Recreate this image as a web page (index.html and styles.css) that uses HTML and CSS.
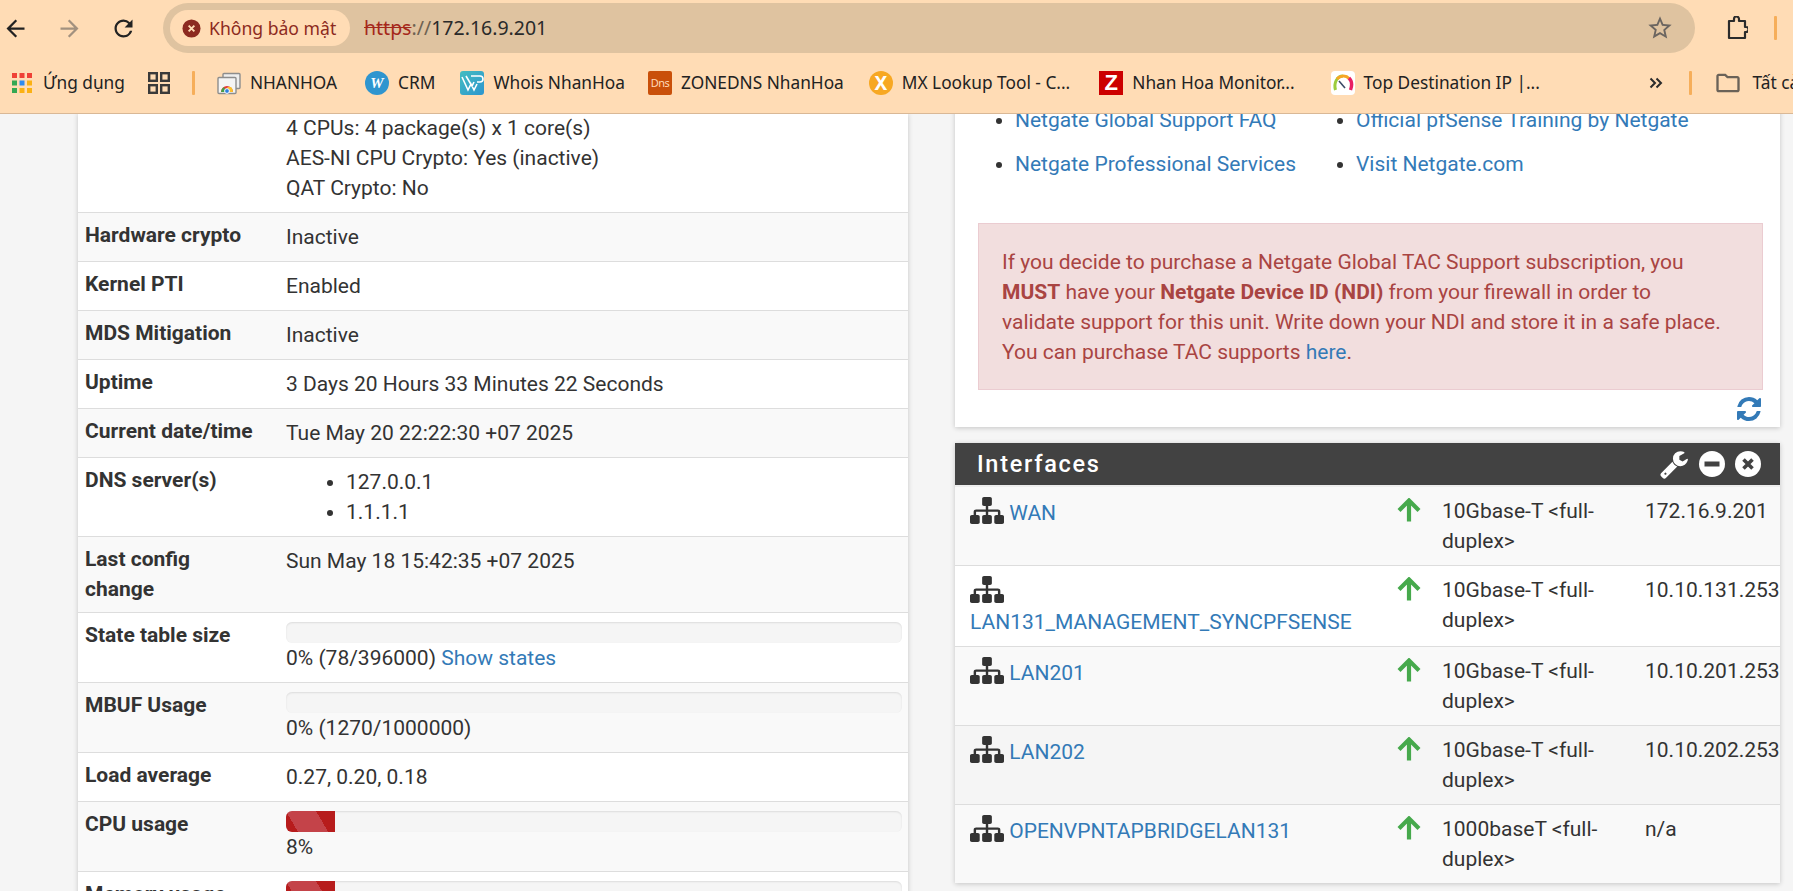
FILE: index.html
```html
<!DOCTYPE html>
<html lang="vi">
<head>
  <meta charset="UTF-8">
  <title>pfSense - Dashboard</title>
  <link rel="stylesheet" href="styles.css">
</head>
<body>

  <!-- Thanh trinh duyet -->
  <header class="browser">
    <div class="toolbar">
      <svg class="nav-icon" viewBox="0 0 24 24"><path d="M20 11H7.83l5.59-5.59L12 4l-8 8 8 8 1.41-1.41L7.83 13H20v-2z"/></svg>
      <svg class="nav-icon nav-off" viewBox="0 0 24 24"><path d="M12 4l-1.41 1.41L16.17 11H4v2h12.17l-5.58 5.59L12 20l8-8z"/></svg>
      <svg class="nav-icon" viewBox="0 0 24 24"><path d="M17.65 6.35A7.958 7.958 0 0 0 12 4c-4.42 0-7.99 3.58-7.99 8s3.57 8 7.99 8c3.73 0 6.84-2.55 7.73-6h-2.08A5.99 5.99 0 0 1 12 18c-3.31 0-6-2.69-6-6s2.69-6 6-6c1.66 0 3.14.69 4.22 1.78L13 11h7V4l-2.35 2.35z"/></svg>
      <div class="omnibox">
        <div class="chip">
          <svg class="chip-icon" viewBox="0 0 20 20">
            <circle cx="10" cy="10" r="9.5" fill="#8c2a20"/>
            <path d="M7 7l6 6M13 7l-6 6" stroke="#ffdcb5" stroke-width="2"/>
          </svg>
          <span>Không bảo mật</span>
        </div>
        <div class="url"><s>https</s><span class="url-sep">://</span>172.16.9.201</div>
        <svg class="star" viewBox="0 0 24 24"><path d="M22 9.24l-7.19-.62L12 2 9.19 8.63 2 9.24l5.46 4.73L5.82 21 12 17.27 18.18 21l-1.63-7.03L22 9.24zM12 15.4l-3.76 2.27 1-4.28-3.32-2.88 4.38-.38L12 6.1l1.71 4.04 4.38.38-3.32 2.88 1 4.28L12 15.4z"/></svg>
      </div>
      <svg class="ext-icon" viewBox="0 0 22 24"><path d="M3 5h5V3a2 2 0 0 1 5 0v2h6v6h1a2.4 2.4 0 0 1 0 5h-1v6H3z" fill="none" stroke="#2b2b2b" stroke-width="2.2" stroke-linejoin="round"/></svg>
      <span class="sep sep-end"></span>
    </div>

    <nav class="bookmarks">
      <a class="bm bm-apps">
        <svg class="fav" viewBox="0 0 20 20">
          <rect width="5" height="5" fill="#ef4136"/><rect x="7.5" width="5" height="5" fill="#ef4136"/><rect x="15" width="5" height="5" fill="#ef4136"/>
          <rect y="7.5" width="5" height="5" fill="#34a853"/><rect x="7.5" y="7.5" width="5" height="5" fill="#2f8bf0"/><rect x="15" y="7.5" width="5" height="5" fill="#fbb114"/>
          <rect y="15" width="5" height="5" fill="#34a853"/><rect x="7.5" y="15" width="5" height="5" fill="#fbb114"/><rect x="15" y="15" width="5" height="5" fill="#fbb114"/>
        </svg>
        <span>Ứng dụng</span>
      </a>
      <svg class="grid-icon" viewBox="0 0 22 22">
        <g fill="none" stroke="#3a3a3a" stroke-width="2.4"><rect x="1.2" y="1.2" width="7.6" height="7.6"/><rect x="13.2" y="1.2" width="7.6" height="7.6"/><rect x="1.2" y="13.2" width="7.6" height="7.6"/><rect x="13.2" y="13.2" width="7.6" height="7.6"/></g>
      </svg>
      <span class="sep sep-bar"></span>

      <a class="bm bm-nhanhoa">
        <svg class="fav" viewBox="0 0 24 24">
          <rect x="6" y="2.5" width="17" height="15" rx="1" fill="#eee" stroke="#8d8d8d" stroke-width="1.4"/>
          <rect x="1" y="6.5" width="18" height="16" rx="1" fill="#f4f4f4" stroke="#8d8d8d" stroke-width="1.4"/>
          <path d="M4 21a6 6 0 0 1 12 0z" fill="#e53935"/>
          <path d="M4 21a6 6 0 0 1 3-5l2 5z" fill="#43a047"/>
          <path d="M12 21a6 6 0 0 0-2-5l4 0a6 6 0 0 1 2 5z" fill="#fbc02d"/>
          <circle cx="10" cy="20" r="2.4" fill="#2f7fe0" stroke="#fff" stroke-width="1"/>
        </svg>
        <span>NHANHOA</span>
      </a>
      <a class="bm bm-crm">
        <span class="fav fav-w">W</span>
        <span>CRM</span>
      </a>
      <a class="bm bm-whois">
        <svg class="fav" viewBox="0 0 24 24">
          <defs><linearGradient id="whoisBg" x1="0" y1="0" x2="1" y2="1"><stop offset="0" stop-color="#45bdc0"/><stop offset="1" stop-color="#2b95cf"/></linearGradient></defs>
          <rect width="24" height="24" rx="3" fill="url(#whoisBg)"/>
          <path d="M2 6l6 13 3-6 3 6 3-6M6 5l6 10 2-4M11 5h9a2.5 2.5 0 0 1 0 6h-3" fill="none" stroke="#fff" stroke-width="1.6"/>
        </svg>
        <span>Whois NhanHoa</span>
      </a>
      <a class="bm bm-dns">
        <span class="fav fav-dns">Dns</span>
        <span>ZONEDNS NhanHoa</span>
      </a>
      <a class="bm bm-mx">
        <span class="fav fav-mx">X</span>
        <span>MX Lookup Tool - C...</span>
      </a>
      <a class="bm bm-zabbix">
        <span class="fav fav-z">Z</span>
        <span>Nhan Hoa Monitor...</span>
      </a>
      <a class="bm bm-top">
        <svg class="fav" viewBox="0 0 24 24">
          <rect width="24" height="24" rx="4" fill="#fff"/>
          <path d="M4.5 19C2.5 12 6 5 12 5" fill="none" stroke="#9ccc3c" stroke-width="3"/>
          <path d="M6 8c3-3.5 9-4 12-.5" fill="none" stroke="#f6a623" stroke-width="3"/>
          <path d="M18 7c3 3 3 8 1.5 12" fill="none" stroke="#e91e63" stroke-width="3.4"/>
          <path d="M8 10l6 7" stroke="#3a4a66" stroke-width="1.6"/>
        </svg>
        <span>Top Destination IP |...</span>
      </a>
      <svg class="more" viewBox="0 0 14 12"><path d="M1.500 1.500L6 6l-4.500 4.500M7.500 1.500L12 6l-4.500 4.500" fill="none" stroke="#2b2b2b" stroke-width="2"/></svg>
      <span class="sep sep-more"></span>
      <svg class="folder" viewBox="0 0 24 24"><path d="M20 6h-8l-2-2H4c-1.1 0-2 .9-2 2v12c0 1.1.9 2 2 2h16c1.1 0 2-.9 2-2V8c0-1.1-.9-2-2-2zm0 12H4V6h5.17l2 2H20v10z"/></svg>
      <span class="bm-all">Tất cả dấu trang</span>
    </nav>
  </header>

  <main class="content">

    <!-- Cot trai: System Information -->
    <section class="panel panel-system">
      <table class="info">
        <tbody>
          <tr class="first">
            <th></th>
            <td>4 CPUs: 4 package(s) x 1 core(s)<br>AES-NI CPU Crypto: Yes (inactive)<br>QAT Crypto: No</td>
          </tr>
          <tr><th>Hardware crypto</th><td>Inactive</td></tr>
          <tr><th>Kernel PTI</th><td>Enabled</td></tr>
          <tr><th>MDS Mitigation</th><td>Inactive</td></tr>
          <tr><th>Uptime</th><td>3 Days 20 Hours 33 Minutes 22 Seconds</td></tr>
          <tr><th>Current date/time</th><td>Tue May 20 22:22:30 +07 2025</td></tr>
          <tr>
            <th>DNS server(s)</th>
            <td><ul class="dns"><li>127.0.0.1</li><li>1.1.1.1</li></ul></td>
          </tr>
          <tr><th>Last config<br>change</th><td>Sun May 18 15:42:35 +07 2025</td></tr>
          <tr>
            <th>State table size</th>
            <td><div class="progress"></div>0% (78/396000) <a href="#">Show states</a></td>
          </tr>
          <tr>
            <th>MBUF Usage</th>
            <td><div class="progress"></div>0% (1270/1000000)</td>
          </tr>
          <tr><th>Load average</th><td>0.27, 0.20, 0.18</td></tr>
          <tr>
            <th>CPU usage</th>
            <td><div class="progress"><div class="progress-bar" style="width: 8%"></div></div>8%</td>
          </tr>
          <tr>
            <th>Memory usage</th>
            <td><div class="progress"><div class="progress-bar" style="width: 8%"></div></div>8%</td>
          </tr>
        </tbody>
      </table>
    </section>

    <div class="col-right">
      <!-- Netgate Services And Support -->
      <section class="panel panel-support">
        <div class="links">
          <ul>
            <li><a href="#">Netgate Global Support FAQ</a></li>
            <li><a href="#">Netgate Professional Services</a></li>
          </ul>
          <ul>
            <li><a href="#">Official pfSense Training by Netgate</a></li>
            <li><a href="#">Visit Netgate.com</a></li>
          </ul>
        </div>
        <div class="alert">
          If you decide to purchase a Netgate Global TAC Support subscription, you<br>
          <b>MUST</b> have your <b>Netgate Device ID (NDI)</b> from your firewall in order to<br>
          validate support for this unit. Write down your NDI and store it in a safe place.<br>
          You can purchase TAC supports <a href="#">here</a>.
        </div>
        <div class="panel-foot">
          <svg class="refresh" viewBox="0 0 1792 1792"><path d="M1639 1056q0 5-1 7-64 268-268 434.5t-478 166.5q-146 0-282.5-55t-243.5-157l-129 129q-19 19-45 19t-45-19-19-45v-448q0-26 19-45t45-19h448q26 0 45 19t19 45-19 45l-137 137q71 66 161 102t187 36q134 0 250-65t186-179q11-17 53-117 8-23 30-23h192q13 0 22.5 9.5t9.5 22.5zm25-800v448q0 26-19 45t-45 19h-448q-26 0-45-19t-19-45 19-45l138-138q-148-137-349-137-134 0-250 65t-186 179q-11 17-53 117-8 23-30 23h-199q-13 0-22.5-9.5t-9.5-22.5v-7q65-268 270-434.5t480-166.5q146 0 284 55.5t245 156.5l130-129q19-19 45-19t45 19 19 45z"/></svg>
        </div>
      </section>

      <!-- Interfaces -->
      <section class="panel panel-interfaces">
        <div class="panel-heading">
          <h2>Interfaces</h2>
          <div class="panel-tools">
            <svg class="tool-wrench" viewBox="0 0 1792 1792"><path d="M448 1472q0-26-19-45t-45-19-45 19-19 45 19 45 45 19 45-19 19-45zm644-420l-682 682q-37 37-90 37-52 0-91-37l-106-108q-38-36-38-90 0-53 38-91l681-681q39 98 114.5 173.5t173.5 114.5zm634-435q0 39-23 106-47 134-164.5 217.5t-258.5 83.5q-185 0-316.5-131.5t-131.5-316.5 131.5-316.5 316.5-131.5q58 0 121.5 16.5t107.5 46.5q16 11 16 28t-16 28l-293 169v224l193 107q5-3 79-48.5t135.5-81 70.5-35.5q15 0 23.5 10t8.5 25z"/></svg>
            <svg class="tool-circle" viewBox="0 0 26 26"><circle cx="13" cy="13" r="13" fill="#fff"/><rect x="5.5" y="10.5" width="15" height="5" fill="#424242"/></svg>
            <svg class="tool-circle" viewBox="0 0 26 26"><circle cx="13" cy="13" r="13" fill="#fff"/><path d="M8.5 8.5l9 9M17.5 8.5l-9 9" stroke="#424242" stroke-width="3.6"/></svg>
          </div>
        </div>
        <table class="ifaces">
          <colgroup><col class="c-name"><col class="c-state"><col class="c-media"><col class="c-ip"></colgroup>
          <tbody>
            <tr>
              <td class="name"><svg class="sitemap" viewBox="0 128 1792 1536" preserveAspectRatio="none"><use href="#sitemapPath"/></svg> <a href="#">WAN</a></td>
              <td><svg class="up" viewBox="0 0 24 24"><use href="#upPath"/></svg></td>
              <td>10Gbase-T &lt;full-duplex&gt;</td>
              <td>172.16.9.201</td>
            </tr>
            <tr>
              <td class="name"><svg class="sitemap" viewBox="0 128 1792 1536" preserveAspectRatio="none"><use href="#sitemapPath"/></svg><br><a href="#">LAN131_MANAGEMENT_SYNCPFSENSE</a></td>
              <td><svg class="up" viewBox="0 0 24 24"><use href="#upPath"/></svg></td>
              <td>10Gbase-T &lt;full-duplex&gt;</td>
              <td>10.10.131.253</td>
            </tr>
            <tr>
              <td class="name"><svg class="sitemap" viewBox="0 128 1792 1536" preserveAspectRatio="none"><use href="#sitemapPath"/></svg> <a href="#">LAN201</a></td>
              <td><svg class="up" viewBox="0 0 24 24"><use href="#upPath"/></svg></td>
              <td>10Gbase-T &lt;full-duplex&gt;</td>
              <td>10.10.201.253</td>
            </tr>
            <tr>
              <td class="name"><svg class="sitemap" viewBox="0 128 1792 1536" preserveAspectRatio="none"><use href="#sitemapPath"/></svg> <a href="#">LAN202</a></td>
              <td><svg class="up" viewBox="0 0 24 24"><use href="#upPath"/></svg></td>
              <td>10Gbase-T &lt;full-duplex&gt;</td>
              <td>10.10.202.253</td>
            </tr>
            <tr>
              <td class="name"><svg class="sitemap" viewBox="0 128 1792 1536" preserveAspectRatio="none"><use href="#sitemapPath"/></svg> <a href="#">OPENVPNTAPBRIDGELAN131</a></td>
              <td><svg class="up" viewBox="0 0 24 24"><use href="#upPath"/></svg></td>
              <td>1000baseT &lt;full-duplex&gt;</td>
              <td>n/a</td>
            </tr>
          </tbody>
        </table>
      </section>
    </div>
  </main>

  <!-- icon dung chung -->
  <svg class="defs">
    <defs>
      <path id="sitemapPath" d="M1792 1248v320q0 40-28 68t-68 28h-320q-40 0-68-28t-28-68v-320q0-40 28-68t68-28h96v-192h-512v192h96q40 0 68 28t28 68v320q0 40-28 68t-68 28h-320q-40 0-68-28t-28-68v-320q0-40 28-68t68-28h96v-192h-512v192h96q40 0 68 28t28 68v320q0 40-28 68t-68 28h-320q-40 0-68-28t-28-68v-320q0-40 28-68t68-28h96v-192q0-52 38-90t90-38h512v-192h-96q-40 0-68-28t-28-68v-320q0-40 28-68t68-28h320q40 0 68 28t28 68v320q0 40-28 68t-68 28h-96v192h512q52 0 90 38t38 90v192h96q40 0 68 28t28 68z"/>
      <path id="upPath" d="M12 23.500V3M2 12.500L12 2.500l10 10" fill="none" stroke="#46a94c" stroke-width="4.2"/>
    </defs>
  </svg>

</body>
</html>
```

FILE: styles.css
```css
* {
  box-sizing: border-box;
}

html, body {
  margin: 0;
  height: 891px;
  overflow: hidden;
  background: #f5f5f5;
  font-family: Roboto, sans-serif;
  font-size: 21px;
  line-height: 30px;
  color: #333;
}

a {
  color: #337ab7;
  text-decoration: none;
}

.defs {
  display: none;
}

/* thanh trinh duyet */
.browser {
  height: 114px;
  background: #ffdcb5;
  border-bottom: 1px solid #d9b896;
  font-family: "Noto Sans", sans-serif;
  color: #222;
}

.toolbar {
  display: flex;
  align-items: center;
  height: 56px;
  padding: 0 0 0 2px;
}

.nav-icon {
  flex: none;
  width: 27px;
  height: 27px;
  margin-right: 27px;
  fill: #222;
}

.nav-off {
  fill: #a2917f;
}

.omnibox {
  display: flex;
  flex: none;
  align-items: center;
  width: 1532px;
  height: 50px;
  margin-left: -1px;
  padding: 0 21px 0 7px;
  background: #dfc3a0;
  border-radius: 25px;
}

.chip {
  display: flex;
  align-items: center;
  gap: 8px;
  width: 180px;
  height: 36px;
  padding-left: 12px;
  background: #ffdcb5;
  border-radius: 18px;
  color: #8c2a20;
  font-size: 17.6px;
}

.chip-icon {
  width: 19px;
  height: 19px;
}

.url {
  margin-left: 14px;
  font-size: 19.5px;
  color: #2a2a2a;
}

.url s {
  color: #a5281b;
}

.url-sep {
  color: #6e6252;
}

.star {
  width: 28px;
  height: 28px;
  margin-left: auto;
  fill: #6b6560;
}

.ext-icon {
  flex: none;
  width: 22px;
  height: 24px;
  margin-left: 31px;
}

.sep {
  display: block;
  flex: none;
  width: 3px;
  height: 24px;
  background: #f6ae5a;
  border-radius: 1px;
}

.sep-end {
  margin-left: 26px;
}

.bookmarks {
  display: flex;
  align-items: center;
  height: 57px;
  padding: 0 0 3px 12px;
  font-size: 17.3px;
  white-space: nowrap;
  overflow: hidden;
}

.bm {
  display: flex;
  flex: none;
  align-items: center;
  gap: 9px;
  color: #222;
}

.fav {
  display: block;
  flex: none;
  width: 24px;
  height: 24px;
}

.bm-apps .fav {
  width: 20px;
  height: 20px;
}

.bm-apps {
  gap: 11px;
  margin-right: 23px;
}

.grid-icon {
  width: 22px;
  height: 22px;
  margin-right: 22px;
  flex: none;
}

.sep-bar {
  margin-right: 22px;
}

.bm-nhanhoa { margin-right: 28px; }
.bm-crm { margin-right: 25px; }
.bm-whois { margin-right: 23px; }
.bm-dns { margin-right: 25px; }
.bm-mx { margin-right: 29px; }
.bm-zabbix { margin-right: 36px; }
.bm-top { width: 318px; }

.fav-w,
.fav-dns,
.fav-mx,
.fav-z {
  text-align: center;
  line-height: 24px;
  color: #fff;
}

.fav-w {
  background: #2f95cf;
  border-radius: 50%;
  font: italic bold 15px/24px "Liberation Serif", serif;
}

.fav-dns {
  background: #c9500a;
  border-radius: 2px;
  color: #ffd9b8;
  font-size: 11px;
  letter-spacing: -0.6px;
}

.fav-mx {
  background: #f7a823;
  border-radius: 50%;
  font-weight: 700;
  font-size: 19px;
}

.fav-z {
  background: #cc0000;
  font: 700 22px/24px "Liberation Sans", sans-serif;
}

.more {
  flex: none;
  width: 14px;
  height: 12px;
  margin-right: 26px;
}

.sep-more {
  margin-right: 22px;
}

.folder {
  flex: none;
  width: 28px;
  height: 28px;
  margin-right: 11px;
  fill: #6a6258;
}

/* noi dung */
.content {
  display: flex;
  align-items: flex-start;
  height: 777px;
  padding-left: 78px;
  overflow: hidden;
}

.panel {
  background: #fff;
  box-shadow: 0 1px 5px rgba(0, 0, 0, 0.2);
}

.panel-system {
  flex: none;
  width: 830px;
  margin-top: -1px;
}

.info {
  width: 100%;
  border-collapse: separate;
  border-spacing: 0;
}

.info tr:nth-child(even) {
  background: #f9f9f9;
}

.info th,
.info td {
  border-bottom: 1px solid #ddd;
  text-align: left;
  vertical-align: top;
}

.info th {
  width: 207px;
  padding: 7px 6px 8px 7px;
  font-weight: 700;
}

.info td {
  padding: 9px 6px 9px 1px;
}

.info .first td {
  padding-top: 0;
}

.dns {
  margin: 0;
  padding-left: 60px;
}

.progress {
  height: 21px;
  background: #f5f5f5;
  border-radius: 6px;
  box-shadow: inset 0 1px 2px rgba(0, 0, 0, 0.1);
  overflow: hidden;
}

/* garis merah miring */
.progress-bar {
  height: 100%;
  background: linear-gradient(60deg, #b71c1c 10.4px, #c44349 10.4px, #c44349 36.5px, #b71c1c 36.5px);
}

.col-right {
  flex: none;
  width: 825px;
  margin-top: -9px;
  margin-left: 47px;
}

.panel-support {
  padding: 0 17px 4px 23px;
}

.links {
  display: flex;
}

.links ul {
  flex: none;
  width: 341px;
  margin: 0;
  padding-left: 37px;
}

.links li {
  margin-bottom: 14px;
  white-space: nowrap;
}

.alert {
  margin-top: 30px;
  padding: 23px 10px 22px 23px;
  background: #f2dede;
  border: 1px solid #ebccd1;
  color: #a94442;
}

.panel-foot {
  display: flex;
  justify-content: flex-end;
  height: 33px;
  padding-top: 5px;
}

.refresh {
  width: 28px;
  height: 28px;
  fill: #337ab7;
}

.panel-interfaces {
  margin-top: 16px;
}

.panel-heading {
  display: flex;
  align-items: center;
  justify-content: space-between;
  height: 44px;
  padding: 0 19px 0 22px;
  background: #424242;
  border-bottom: 2px solid #eee;
}

.panel-heading h2 {
  margin: 0;
  font-size: 23.5px;
  font-weight: 500;
  letter-spacing: 1.7px;
  color: #fff;
}

.panel-tools {
  display: flex;
  align-items: center;
  gap: 10px;
}

.tool-wrench {
  width: 30px;
  height: 30px;
  fill: #fff;
}

.tool-circle {
  width: 26px;
  height: 26px;
}

.ifaces {
  width: 100%;
  table-layout: fixed;
  border-collapse: separate;
  border-spacing: 0;
}

.c-name { width: 437px; }
.c-state { width: 45px; }
.c-media { width: 203px; }
.c-ip { width: 140px; }

.ifaces tr:nth-child(odd) {
  background: #f9f9f9;
}

.ifaces tr:nth-child(4) {
  background: #f5f5f5;
}

.ifaces tr:nth-child(2) {
  background: #fff;
}

.ifaces td {
  padding: 9px 0 9px 5px;
  border-bottom: 1px solid #ddd;
  vertical-align: top;
}

.ifaces tr:last-child td {
  border-bottom: 0;
}

.ifaces .name {
  padding-left: 15px;
  padding-top: 10px;
  white-space: nowrap;
}

.sitemap {
  width: 34px;
  height: 27px;
  vertical-align: -4px;
  fill: #333;
}

.up {
  display: block;
  width: 24px;
  height: 24px;
  margin-top: 2px;
}
```
